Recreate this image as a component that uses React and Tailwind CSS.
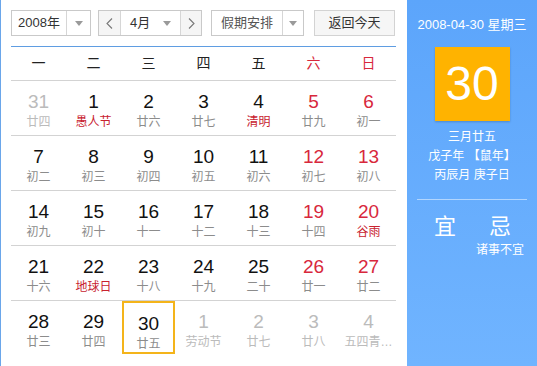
const font = { fontFamily: '"Liberation Sans", Arial, "Noto Sans CJK SC", sans-serif' }

const weekdays = ['一', '二', '三', '四', '五', '六', '日']

// [day, lunar, kind] kind: o = other month, h = holiday text red, w = weekend
const rows = [
  [['31', '廿四', 'o'], ['1', '愚人节', 'h'], ['2', '廿六'], ['3', '廿七'], ['4', '清明', 'h'], ['5', '廿九', 'w'], ['6', '初一', 'w']],
  [['7', '初二'], ['8', '初三'], ['9', '初四'], ['10', '初五'], ['11', '初六'], ['12', '初七', 'w'], ['13', '初八', 'w']],
  [['14', '初九'], ['15', '初十'], ['16', '十一'], ['17', '十二'], ['18', '十三'], ['19', '十四', 'w'], ['20', '谷雨', 'wh']],
  [['21', '十六'], ['22', '地球日', 'h'], ['23', '十八'], ['24', '十九'], ['25', '二十'], ['26', '廿一', 'w'], ['27', '廿二', 'w']],
  [['28', '廿三'], ['29', '廿四'], ['30', '廿五', 't'], ['1', '劳动节', 'o'], ['2', '廿七', 'o'], ['3', '廿八', 'o'], ['4', '五四青…', 'o']],
]

function Caret() {
  return (
    <svg width="8" height="5" viewBox="0 0 8 5">
      <path d="M0 0h8L4 5z" fill="#9a9a9a" />
    </svg>
  )
}

function Chevron({ dir }) {
  return (
    <svg width="7" height="11" viewBox="0 0 7 11">
      <path d={dir === 'l' ? 'M6 0.5L1 5.5l5 5' : 'M1 0.5l5 5-5 5'} stroke="#777" strokeWidth="1.1" fill="none" />
    </svg>
  )
}

function Cell({ day, lunar, kind = '' }) {
  const other = kind.includes('o')
  const weekend = kind.includes('w')
  const holiday = kind.includes('h')
  const today = kind.includes('t')
  const numColor = other ? 'text-[#bbbbbb]' : weekend ? 'text-[#d8283c]' : 'text-[#111]'
  const lunarColor = other ? 'text-[#bbbbbb]' : holiday ? 'text-[#c8222f]' : 'text-[#8c8c8c]'
  return (
    <div className="flex justify-center items-start">
      <div
        className={
          'w-[53px] h-[53px] flex flex-col items-center pt-[10px] ' +
          (today ? 'border-2 border-[#f4b41a] pt-[8px]' : '')
        }
      >
        <div className={'text-[19px] leading-[21px] ' + numColor}>{day}</div>
        <div className={'text-[12px] leading-[16px] mt-[2px] whitespace-nowrap ' + lunarColor}>{lunar}</div>
      </div>
    </div>
  )
}

export default function App() {
  return (
    <div className="flex w-[537px] h-[366px] bg-white overflow-hidden" style={font}>
      {/* Calendar */}
      <div className="w-[407px] h-full border-l border-[#6aa6ea] pl-[10px] pr-[11px] pt-[10px]">
        <div className="flex items-center h-[26px] text-[13px] text-[#333] whitespace-nowrap">
          <div className="flex h-[26px] w-[80px] border border-[#c9c9c9]">
            <div className="w-[55px] flex items-center justify-center border-r border-[#d6d6d6]">2008年</div>
            <div className="flex-1 flex items-center justify-center"><Caret /></div>
          </div>
          <div className="flex h-[26px] w-[104px] ml-[7px] border border-[#c9c9c9]">
            <div className="w-[22px] flex items-center justify-center bg-[#f5f5f5] border-r border-[#d6d6d6]"><Chevron dir="l" /></div>
            <div className="w-[59px] flex items-center pl-[9px]">
              <span>4月</span>
              <span className="ml-[13px] flex"><Caret /></span>
            </div>
            <div className="flex-1 flex items-center justify-center bg-[#f5f5f5] border-l border-[#d6d6d6]"><Chevron dir="r" /></div>
          </div>
          <div className="flex h-[26px] w-[93px] ml-[9px] border border-[#c9c9c9]">
            <div className="w-[71px] flex items-center justify-center border-r border-[#d6d6d6] text-[#555]">假期安排</div>
            <div className="flex-1 flex items-center justify-center"><Caret /></div>
          </div>
          <div className="flex h-[26px] w-[81px] ml-[10px] items-center justify-center border border-[#d3d3d3] bg-[#f6f6f6] text-[#333]">
            返回今天
          </div>
        </div>

        <div className="mt-[10px] border-t border-[#5f9de2]">
          <div className="grid grid-cols-7 h-[34px] items-center border-b border-[#d3d3d3] text-[14px]">
            {weekdays.map((w, i) => (
              <div key={w} className={'text-center ' + (i > 4 ? 'text-[#d8283c]' : 'text-[#222]')}>{w}</div>
            ))}
          </div>
          {rows.map((r, ri) => (
            <div
              key={ri}
              className={'grid grid-cols-7 h-[55px] ' + (ri < rows.length - 1 ? 'border-b border-[#d3d3d3]' : '')}
            >
              {r.map(([d, l, k], ci) => (
                <Cell key={ci} day={d} lunar={l} kind={k} />
              ))}
            </div>
          ))}
        </div>
      </div>

      {/* Side panel */}
      <div className="flex-1 h-full bg-gradient-to-b from-[#5ca5fb] to-[#70b4ff] text-white flex flex-col items-center">
        <div className="mt-[16px] text-[13px] leading-[18px]">2008-04-30 星期三</div>
        <div className="mt-[13px] w-[75px] h-[74px] bg-[#ffb300] flex items-center justify-center shadow-[0_1px_2px_rgba(0,0,0,0.2)]">
          <span className="text-[48px] leading-none">30</span>
        </div>
        <div className="mt-[7px] text-[12px] leading-[19px] text-center">
          <div>三月廿五</div>
          <div>戊子年 【鼠年】</div>
          <div>丙辰月 庚子日</div>
        </div>
        <div className="mt-[14px] w-[110px] h-px bg-white/50" />
        <div className="mt-[14px] w-full flex text-[22px] leading-[26px]">
          <div className="w-[76px] text-center">宜</div>
          <div className="w-[34px] text-center">忌</div>
        </div>
        <div className="w-full flex text-[12px] leading-[16px] mt-[2px]">
          <div className="w-[69px]" />
          <div className="w-[48px] text-center">诸事不宜</div>
        </div>
      </div>
    </div>
  )
}
